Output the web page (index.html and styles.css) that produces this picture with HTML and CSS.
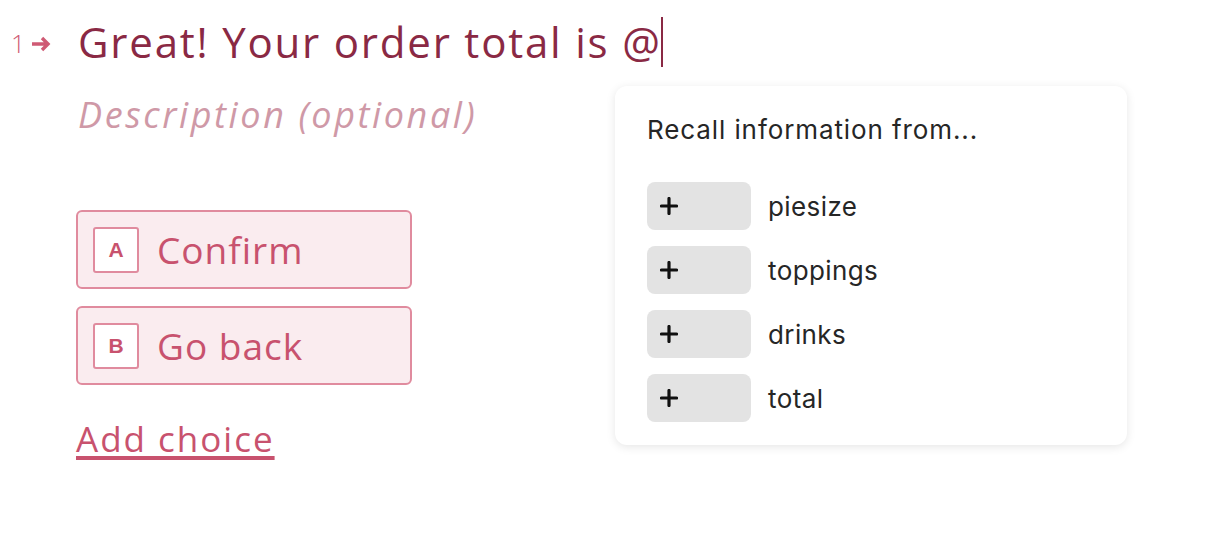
FILE: index.html
```html
<!DOCTYPE html>
<html lang="en">
<head>
  <meta charset="UTF-8" />
  <title>Question editor</title>
  <link rel="stylesheet" href="styles.css">
</head>
<body>
  <div class="question">
    <div class="question-number">
      <span>1</span>
      <svg width="20" height="16" viewBox="0 0 20 16"><path d="M1 8h16M11 2l6 6-6 6" fill="none" stroke="currentColor" stroke-width="3.4"/></svg>
    </div>
    <div class="question-body">
      <h1 class="title">Great! Your order total is @<span class="caret"></span></h1>
      <p class="description">Description (optional)</p>
      <ul class="choices">
        <li><span class="key">A</span>Confirm</li>
        <li><span class="key">B</span>Go back</li>
      </ul>
      <a class="add-choice" href="#">Add choice</a>
    </div>
  </div>

  <div class="recall">
    <p class="recall-title">Recall information from...</p>
    <ul class="recall-list">
      <li><span class="pill"><svg width="18" height="18" viewBox="0 0 18 18"><path d="M9 1.5v15M1.5 9h15" stroke="#111" stroke-width="3.2" stroke-linecap="round"/></svg></span>piesize</li>
      <li><span class="pill"><svg width="18" height="18" viewBox="0 0 18 18"><path d="M9 1.5v15M1.5 9h15" stroke="#111" stroke-width="3.2" stroke-linecap="round"/></svg></span>toppings</li>
      <li><span class="pill"><svg width="18" height="18" viewBox="0 0 18 18"><path d="M9 1.5v15M1.5 9h15" stroke="#111" stroke-width="3.2" stroke-linecap="round"/></svg></span>drinks</li>
      <li><span class="pill"><svg width="18" height="18" viewBox="0 0 18 18"><path d="M9 1.5v15M1.5 9h15" stroke="#111" stroke-width="3.2" stroke-linecap="round"/></svg></span>total</li>
    </ul>
  </div>
</body>
</html>
```

FILE: styles.css
```css
* {
  box-sizing: border-box;
}

body {
  margin: 0;
  background: #fff;
  font-family: "Open Sans", "Liberation Sans", sans-serif;
  position: relative;
  height: 556px;
  overflow: hidden;
}

.question {
  display: flex;
  padding-top: 16px;
}

.question-number {
  width: 78px;
  padding-left: 11px;
  padding-top: 12px;
  display: flex;
  align-items: flex-start;
  gap: 6px;
  color: #cf5a74;
  font-size: 25px;
  font-weight: 300;
  line-height: 30px;
}

.question-number svg {
  margin-top: 8px;
}

.title {
  margin: 0;
  font-weight: 400;
  font-size: 42px;
  line-height: 52px;
  letter-spacing: 1.8px;
  color: #8a2944;
  display: flex;
  align-items: center;
}

.caret {
  display: inline-block;
  width: 2px;
  height: 50px;
  background: #8a2944;
  margin-left: -1px;
}

.description {
  margin: 24px 0 0;
  font-style: italic;
  font-size: 36px;
  line-height: 46px;
  letter-spacing: 2.6px;
  color: #cf99a7;
}

.choices {
  margin: 72px 0 0;
  padding: 0;
  list-style: none;
  display: flex;
  flex-direction: column;
  gap: 17px;
}

.choices li {
  width: 336px;
  height: 79px;
  margin-left: -2px;
  border: 2px solid #e08b9e;
  border-radius: 6px;
  background: #faecef;
  display: flex;
  align-items: center;
  padding-left: 15px;
  font-size: 37px;
  letter-spacing: 1px;
  color: #c8526e;
}

.key {
  width: 46px;
  height: 46px;
  margin-right: 18px;
  border: 2px solid #e08b9e;
  border-radius: 3px;
  background: #fff;
  display: flex;
  align-items: center;
  justify-content: center;
  font-size: 21px;
  font-weight: 700;
  letter-spacing: 0;
  font-family: "Liberation Sans", sans-serif;
}

.add-choice {
  display: block;
  width: fit-content;
  margin-top: 32px;
  margin-left: -2px;
  font-size: 35px;
  line-height: 44px;
  letter-spacing: 2px;
  color: #c8526e;
  text-decoration: underline;
  text-decoration-thickness: 4px;
  text-underline-offset: 4px;
}

.recall {
  position: absolute;
  left: 615px;
  top: 86px;
  width: 512px;
  height: 359px;
  padding: 27px 32px 24px;
  background: #fff;
  border-radius: 12px;
  box-shadow: 0 2px 10px rgba(0, 0, 0, 0.1);
  font-family: Inter, "Noto Sans", sans-serif;
  color: #262626;
}

.recall-title {
  margin: 0;
  font-size: 26px;
  line-height: 34px;
  letter-spacing: 0.9px;
}

.recall-list {
  margin: 35px 0 0;
  padding: 0;
  list-style: none;
  display: flex;
  flex-direction: column;
  gap: 16px;
}

.recall-list li {
  display: flex;
  align-items: center;
  font-size: 26px;
  letter-spacing: 0.4px;
}

.pill {
  width: 104px;
  height: 48px;
  margin-right: 17px;
  border-radius: 8px;
  background: #e3e3e3;
  display: flex;
  align-items: center;
  padding-left: 13px;
}
```
